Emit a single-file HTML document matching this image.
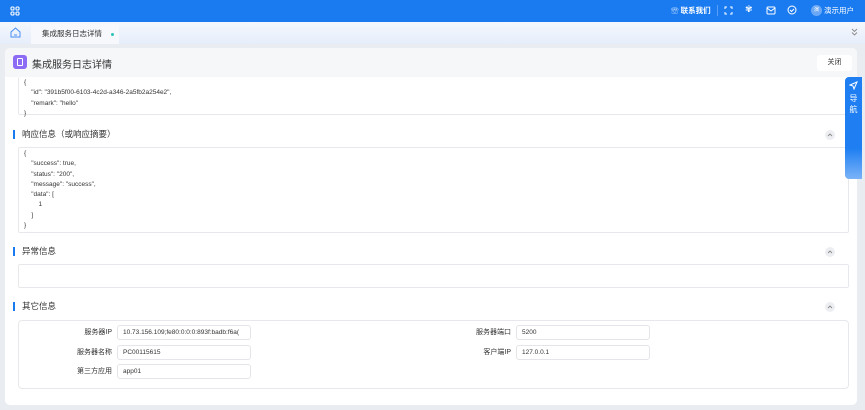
<!DOCTYPE html>
<html><head><meta charset="utf-8"><style>
*{box-sizing:border-box;margin:0;padding:0}
body{width:865px;height:410px;overflow:hidden;background:#e9ecf0;font-family:"Liberation Sans","Noto Sans CJK SC",sans-serif;color:#333;position:relative}
.top{position:absolute;left:0;top:0;width:865px;height:22px;background:#1a7bf0}
.tabs{position:absolute;left:0;top:22px;width:865px;height:22px;background:linear-gradient(#f4f7fd,#e6eefb)}
.tab{position:absolute;left:31px;top:2px;width:88px;height:20px;background:#f6f8fc;font-size:7.5px;line-height:20px;padding-left:11px;color:#333}
.card{position:absolute;left:5px;top:48px;width:852px;height:357px;background:#fff;border-radius:5px;overflow:hidden}
.hdr{height:29px;background:#f6f7f9;position:relative}
.ta{position:absolute;left:13px;width:831px;border:1px solid #e6e8eb;border-radius:2px;font-size:6.5px;line-height:10.3px;color:#333;padding:1px 2px;background:#fff}
.sec{position:absolute;left:8px;font-size:8.5px;color:#333;padding-left:7px;border-left:2px solid #1a7bf0;line-height:9px}
.up{position:absolute;left:820px;width:10px;height:10px;border-radius:50%;background:#eceef1}
.lbl{position:absolute;font-size:7px;color:#333;text-align:right;width:76px;line-height:14px}
.inp{position:absolute;height:15px;border:1px solid #e3e5e8;border-radius:3px;font-size:6.5px;padding-left:5px;width:134px;color:#333;overflow:hidden;white-space:nowrap;display:flex;align-items:center}
</style></head><body>
<div class="top">
<svg style="position:absolute;left:10px;top:6px" width="10" height="10" viewBox="0 0 10 10" fill="none" stroke="#fff" stroke-width="1.1"><rect x="1" y="1" width="3" height="3" rx="1"/><rect x="6" y="1" width="3" height="3" rx="1"/><rect x="1" y="6" width="3" height="3" rx="1"/><rect x="6" y="6" width="3" height="3" rx="1"/></svg>
<div style="position:absolute;left:671px;top:5px;font-size:7.5px;color:#fff;font-weight:bold">☏ 联系我们</div>
<div style="position:absolute;left:717px;top:5px;width:1px;height:11px;background:#5a9ff5"></div>
<svg style="position:absolute;left:724px;top:6px" width="9" height="9" viewBox="0 0 9 9" fill="none" stroke="#fff" stroke-width="1"><path d="M1 3V1h2M6 1h2v2M8 6v2H6M3 8H1V6"/></svg>
<div style="position:absolute;left:745px;top:4px;font-size:9px;color:#fff">✾</div>
<svg style="position:absolute;left:766px;top:6px" width="10" height="9" viewBox="0 0 10 9" fill="none" stroke="#fff" stroke-width="1"><rect x="1" y="1" width="8" height="7" rx="1"/><path d="M1 2l4 3 4-3"/></svg>
<svg style="position:absolute;left:787px;top:5px" width="10" height="10" viewBox="0 0 10 10" fill="none" stroke="#fff" stroke-width="1"><circle cx="5" cy="5" r="4"/><path d="M3 5l1.5 1.5L7 4"/></svg>
<div style="position:absolute;left:811px;top:5px;width:11px;height:11px;border-radius:50%;background:#6aa8f5;font-size:5px;color:#fff;text-align:center;line-height:11px">演</div>
<div style="position:absolute;left:824px;top:5px;font-size:7.5px;color:#fff">演示用户</div>
</div>
<div class="tabs">
<svg style="position:absolute;left:10px;top:5px" width="11" height="11" viewBox="0 0 11 11" fill="none" stroke="#4a8ef0" stroke-width="1"><path d="M1 5L5.5 1 10 5v5H1z"/><path d="M4 8h3"/></svg>
<div class="tab">集成服务日志详情<span style="position:absolute;left:80px;top:9px;width:3px;height:3px;border-radius:50%;background:#2bc3b9"></span></div>
<svg style="position:absolute;left:851px;top:6px" width="7" height="8" viewBox="0 0 7 8" fill="none" stroke="#888" stroke-width="0.9"><path d="M1 1l2.5 2.5L6 1M1 4.5l2.5 2.5L6 4.5"/></svg>
</div>
<div class="card">
<div class="hdr">
<div style="position:absolute;left:8px;top:7px;width:14px;height:14px;border-radius:3px;background:#8c6cf5"><div style="position:absolute;left:4px;top:3px;width:6px;height:8px;border:1.3px solid #fff;border-radius:1px"></div></div>
<div style="position:absolute;left:27px;top:8px;font-size:10px;color:#333">集成服务日志详情</div>
<div style="position:absolute;left:812px;top:7px;width:35px;height:16px;background:#fff;border-radius:3px;font-size:7px;text-align:center;line-height:16px;color:#333">关闭</div>
</div>
<div class="ta" style="top:29px;height:38px;border-top:none;padding-left:5px">{<br>&nbsp;&nbsp;&nbsp;&nbsp;"id": "391b5f00-6103-4c2d-a346-2a5fb2a254e2",<br>&nbsp;&nbsp;&nbsp;&nbsp;"remark": "hello"<br>}</div>
<div class="sec" style="top:82px">响应信息（或响应摘要）</div>
<svg class="up" style="top:82px" viewBox="0 0 10 10"><path d="M3 6l2-2 2 2" fill="none" stroke="#888" stroke-width="0.9"/></svg>
<div class="ta" style="top:99px;height:86px;padding-left:5px">{<br>&nbsp;&nbsp;&nbsp;&nbsp;"success": true,<br>&nbsp;&nbsp;&nbsp;&nbsp;"status": "200",<br>&nbsp;&nbsp;&nbsp;&nbsp;"message": "success",<br>&nbsp;&nbsp;&nbsp;&nbsp;"data": [<br>&nbsp;&nbsp;&nbsp;&nbsp;&nbsp;&nbsp;&nbsp;&nbsp;1<br>&nbsp;&nbsp;&nbsp;&nbsp;]<br>}</div>
<div class="sec" style="top:199px">异常信息</div>
<svg class="up" style="top:199px" viewBox="0 0 10 10"><path d="M3 6l2-2 2 2" fill="none" stroke="#888" stroke-width="0.9"/></svg>
<div class="ta" style="top:216px;height:24px"></div>
<div class="sec" style="top:254px">其它信息</div>
<svg class="up" style="top:254px" viewBox="0 0 10 10"><path d="M3 6l2-2 2 2" fill="none" stroke="#888" stroke-width="0.9"/></svg>
<div class="ta" style="top:272px;height:69px;border-radius:4px"></div>
<div class="lbl" style="left:31px;top:278px">服务器IP</div>
<div class="inp" style="left:112px;top:277px">10.73.156.109;fe80:0:0:0:893f:badb:f6a(</div>
<div class="lbl" style="left:31px;top:298px">服务器名称</div>
<div class="inp" style="left:112px;top:297px">PC00115615</div>
<div class="lbl" style="left:31px;top:317px">第三方应用</div>
<div class="inp" style="left:112px;top:316px">app01</div>
<div class="lbl" style="left:430px;top:278px">服务器端口</div>
<div class="inp" style="left:511px;top:277px">5200</div>
<div class="lbl" style="left:430px;top:298px">客户端IP</div>
<div class="inp" style="left:511px;top:297px">127.0.0.1</div>
</div>
<div style="position:absolute;left:845px;top:77px;width:17px;height:102px;background:linear-gradient(#1f7ff2 70%,#7ab3f7);border-radius:4px 0 0 4px;color:#fff;font-size:8px;text-align:center;padding-top:4px;line-height:11px">
<svg width="9" height="9" viewBox="0 0 9 9" fill="none" stroke="#fff" stroke-width="1"><path d="M8 1L1 4l3 1 1 3z"/></svg><br>导<br>航</div>
</body></html>
